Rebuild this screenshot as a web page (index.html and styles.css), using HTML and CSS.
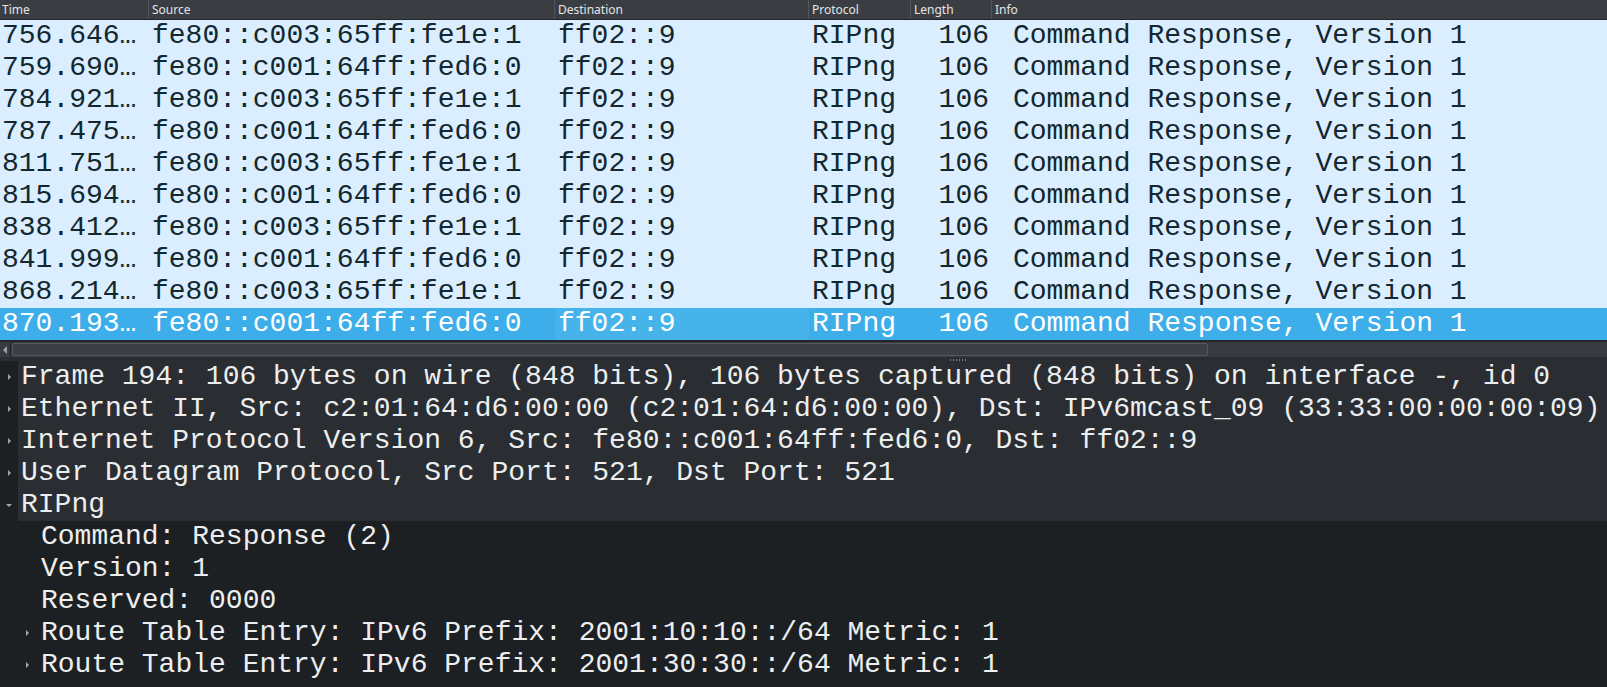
FILE: index.html
```html
<!DOCTYPE html>
<html>
<head>
<meta charset="utf-8">
<link rel="stylesheet" href="styles.css">
</head>
<body>
<div class="app">
  <div class="plist">
    <div class="phead">
      <div class="hc">Time</div>
      <div class="hc">Source</div>
      <div class="hc">Destination</div>
      <div class="hc">Protocol</div>
      <div class="hc">Length</div>
      <div class="hc last">Info</div>
    </div>
    <div class="prow"><span class="c">756.646…</span><span class="c">fe80::c003:65ff:fe1e:1</span><span class="c">ff02::9</span><span class="c">RIPng</span><span class="c num">106</span><span class="c info">Command Response, Version 1</span></div>
    <div class="prow"><span class="c">759.690…</span><span class="c">fe80::c001:64ff:fed6:0</span><span class="c">ff02::9</span><span class="c">RIPng</span><span class="c num">106</span><span class="c info">Command Response, Version 1</span></div>
    <div class="prow"><span class="c">784.921…</span><span class="c">fe80::c003:65ff:fe1e:1</span><span class="c">ff02::9</span><span class="c">RIPng</span><span class="c num">106</span><span class="c info">Command Response, Version 1</span></div>
    <div class="prow"><span class="c">787.475…</span><span class="c">fe80::c001:64ff:fed6:0</span><span class="c">ff02::9</span><span class="c">RIPng</span><span class="c num">106</span><span class="c info">Command Response, Version 1</span></div>
    <div class="prow"><span class="c">811.751…</span><span class="c">fe80::c003:65ff:fe1e:1</span><span class="c">ff02::9</span><span class="c">RIPng</span><span class="c num">106</span><span class="c info">Command Response, Version 1</span></div>
    <div class="prow"><span class="c">815.694…</span><span class="c">fe80::c001:64ff:fed6:0</span><span class="c">ff02::9</span><span class="c">RIPng</span><span class="c num">106</span><span class="c info">Command Response, Version 1</span></div>
    <div class="prow"><span class="c">838.412…</span><span class="c">fe80::c003:65ff:fe1e:1</span><span class="c">ff02::9</span><span class="c">RIPng</span><span class="c num">106</span><span class="c info">Command Response, Version 1</span></div>
    <div class="prow"><span class="c">841.999…</span><span class="c">fe80::c001:64ff:fed6:0</span><span class="c">ff02::9</span><span class="c">RIPng</span><span class="c num">106</span><span class="c info">Command Response, Version 1</span></div>
    <div class="prow"><span class="c">868.214…</span><span class="c">fe80::c003:65ff:fe1e:1</span><span class="c">ff02::9</span><span class="c">RIPng</span><span class="c num">106</span><span class="c info">Command Response, Version 1</span></div>
    <div class="prow sel"><span class="c">870.193…</span><span class="c">fe80::c001:64ff:fed6:0</span><span class="c focus">ff02::9</span><span class="c">RIPng</span><span class="c num">106</span><span class="c info">Command Response, Version 1</span></div>
  </div>

  <div class="hscroll">
    <div class="sbtn"><span class="larr"></span></div>
    <div class="shandle"></div>
    <div class="strack"></div>
  </div>

  <div class="splitter"><div class="grip"></div></div>

  <div class="ptree">
    <div class="trow top"><span class="gut"><span class="tri right"></span></span><span class="tt">Frame 194: 106 bytes on wire (848 bits), 106 bytes captured (848 bits) on interface -, id 0</span></div>
    <div class="trow top"><span class="gut"><span class="tri right"></span></span><span class="tt">Ethernet II, Src: c2:01:64:d6:00:00 (c2:01:64:d6:00:00), Dst: IPv6mcast_09 (33:33:00:00:00:09)</span></div>
    <div class="trow top"><span class="gut"><span class="tri right"></span></span><span class="tt">Internet Protocol Version 6, Src: fe80::c001:64ff:fed6:0, Dst: ff02::9</span></div>
    <div class="trow top"><span class="gut"><span class="tri right"></span></span><span class="tt">User Datagram Protocol, Src Port: 521, Dst Port: 521</span></div>
    <div class="trow top"><span class="gut"><span class="tri down"></span></span><span class="tt">RIPng</span></div>
    <div class="trow child"><span class="gut2"></span><span class="tt">Command: Response (2)</span></div>
    <div class="trow child"><span class="gut2"></span><span class="tt">Version: 1</span></div>
    <div class="trow child"><span class="gut2"></span><span class="tt">Reserved: 0000</span></div>
    <div class="trow child"><span class="gut2"><span class="tri right"></span></span><span class="tt">Route Table Entry: IPv6 Prefix: 2001:10:10::/64 Metric: 1</span></div>
    <div class="trow child"><span class="gut2"><span class="tri right"></span></span><span class="tt">Route Table Entry: IPv6 Prefix: 2001:30:30::/64 Metric: 1</span></div>
  </div>
</div>
</body>
</html>
```

FILE: styles.css
```css
* { box-sizing: border-box; }
html, body {
  margin: 0;
  padding: 0;
  width: 1607px;
  height: 687px;
  overflow: hidden;
  background: #1d2023;
}
.app {
  display: flex;
  flex-direction: column;
  width: 1607px;
  height: 687px;
}

/* packet list */
.plist {
  display: flex;
  flex-direction: column;
  background: #daeeff;
}
.phead, .prow {
  display: grid;
  grid-template-columns: 149px 406px 254px 102px 81px 1fr;
}
.phead {
  height: 20px;
  background: #3a3e43;
  border-bottom: 1px solid #232629;
  font-family: "Noto Sans", sans-serif;
  font-size: 12px;
  color: #e3e5e7;
}
.hc {
  padding-left: 3px;
  line-height: 19px;
  border-right: 1px solid #52565b;
  white-space: nowrap;
  overflow: hidden;
}
.hc:first-child { padding-left: 2px; }
.hc.last { border-right: none; }
.prow {
  height: 32px;
  font-family: "Liberation Mono", monospace;
  font-size: 28px;
  line-height: 32px;
  color: #12272e;
}
.c {
  white-space: pre;
  overflow: hidden;
  padding-left: 3px;
}
.c:first-child { padding-left: 2px; }
.c.num { text-align: right; padding-left: 0; padding-right: 3px; }
.c.info { padding-left: 21px; }
.prow.sel {
  background: #3daee9;
  color: #ffffff;
}
.c.focus { background: #47b3eb; }

/* horizontal scrollbar */
.hscroll {
  display: flex;
  height: 17px;
  background: #373b40;
  border-top: 2px solid #232629;
  padding: 1px 0 1px 0;
}
.sbtn {
  width: 11px;
  display: flex;
  align-items: center;
  justify-content: center;
  border-right: 1px solid #25282b;
}
.larr {
  width: 0;
  height: 0;
  border-top: 4px solid transparent;
  border-bottom: 4px solid transparent;
  border-right: 4px solid #9da1a5;
}
.shandle {
  width: 1196px;
  background: #3c4046;
  border: 1px solid #55595e;
  border-radius: 2px;
  margin-left: 1px;
}
.strack { flex: 1; }

/* splitter */
.splitter {
  height: 4px;
  background: #2a2d31;
  display: flex;
  justify-content: flex-start;
  align-items: flex-end;
  padding-left: 950px;
}
.grip {
  width: 16px;
  height: 2px;
  background: repeating-linear-gradient(90deg, #7c8085 0 1px, transparent 1px 3px);
}

/* tree */
.ptree {
  flex: 1;
  display: flex;
  flex-direction: column;
  background: #1d2023;
  font-family: "Liberation Mono", monospace;
  font-size: 28px;
  color: #eceeef;
}
.trow {
  display: flex;
  height: 32px;
  line-height: 32px;
  white-space: pre;
}
.trow.top .tt {
  flex: 1;
  background: #2a2d31;
  padding-left: 3px;
}
.gut {
  width: 18px;
  flex: none;
  display: flex;
  align-items: center;
  justify-content: center;
}
.gut2 {
  width: 38px;
  flex: none;
  display: flex;
  align-items: center;
  justify-content: flex-end;
  padding-right: 9px;
}
.trow.child .tt { padding-left: 3px; }
.tri {
  width: 0;
  height: 0;
  display: block;
}
.tri.right {
  border-top: 3px solid transparent;
  border-bottom: 3px solid transparent;
  border-left: 3px solid #a3a7ab;
}
.tri.down {
  border-left: 3px solid transparent;
  border-right: 3px solid transparent;
  border-top: 3px solid #a3a7ab;
}
```
